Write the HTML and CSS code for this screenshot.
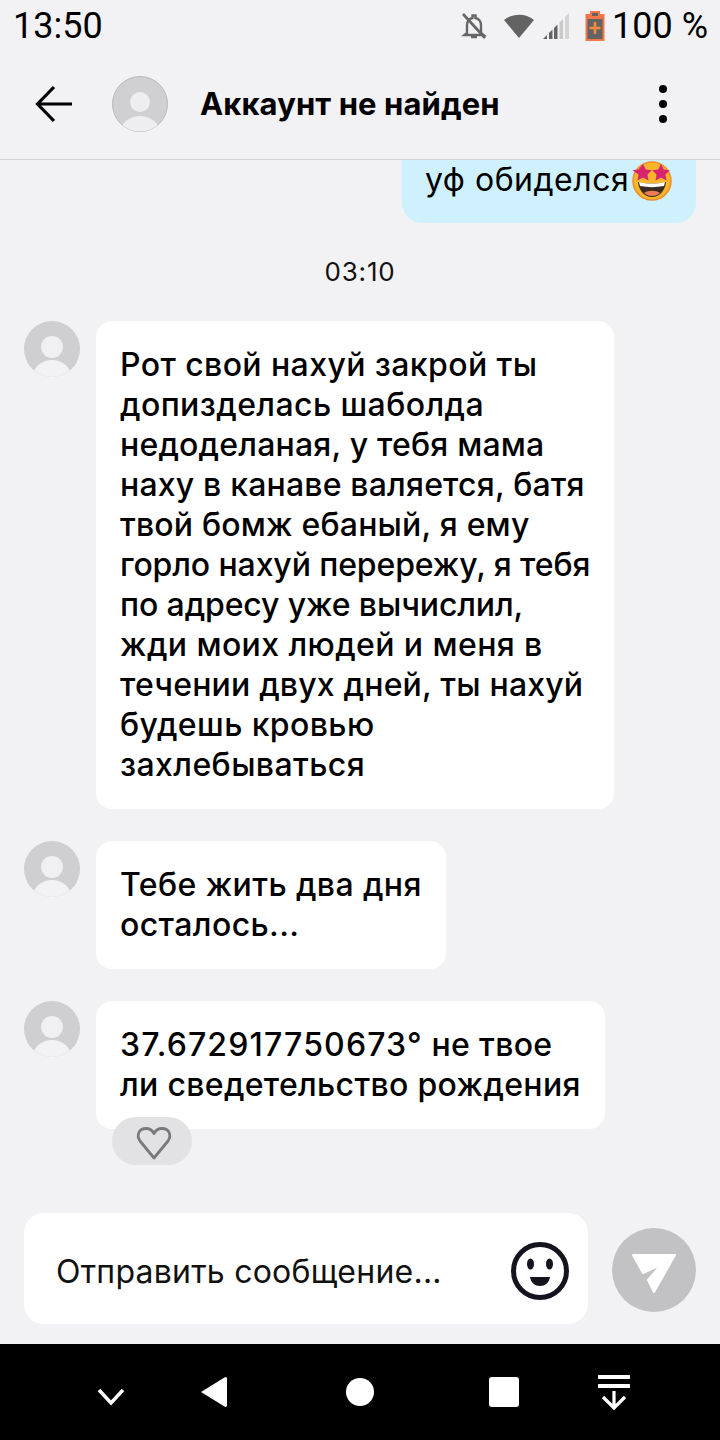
FILE: index.html
```html
<!DOCTYPE html>
<html lang="ru">
<head>
<meta charset="utf-8">
<title>Аккаунт не найден</title>
<link rel="stylesheet" href="styles.css">
</head>
<body>
<div class="phone">
  <div class="status">
    <span class="clock">13:50</span>
    <div class="status-right">
      <svg class="ic-bell" width="28" height="28" viewBox="0 0 28 28"><path d="M7 21V13a7 7 0 0 1 5.500-7V3.500h3V6a7 7 0 0 1 5.500 7v8l2.500 2H4.500z" fill="none" stroke="#666" stroke-width="2.400"/><path d="M11 25h6" stroke="#666" stroke-width="2.500"/><path d="M3 2l22 24" stroke="#666" stroke-width="2.600"/></svg>
      <svg class="ic-wifi" width="32" height="26" viewBox="0 0 32 26"><path d="M1 7C9 0 23 0 31 7L16 25z" fill="#636363"/></svg>
      <svg class="ic-signal" width="28" height="28" viewBox="0 0 28 28"><path d="M0 27l4-4v4z" fill="#636363"/><path d="M6 27v-6l3.500-3.500V27z" fill="#636363"/><path d="M11 27V16l3.500-3.500V27z" fill="#636363"/><path d="M16.500 27V10.500L20 7v20z" fill="#c9c9c9"/><path d="M22 27V5l4-4v26z" fill="#d4d4d4"/></svg>
      <svg class="ic-batt" width="20" height="30" viewBox="0 0 20 30"><path d="M6 1h8v3h4.500v25H1.500V4H6z" fill="#636363" stroke="#f2764a" stroke-width="2"/><path d="M2.500 5h15v3h-15z" fill="#f2764a"/><path d="M10 11v12M4.500 17h11" stroke="#f58a3c" stroke-width="2.600"/></svg>
      <span class="percent">100 %</span>
    </div>
  </div>

  <header class="topbar">
    <svg class="back" width="40" height="38" viewBox="0 0 40 38"><path d="M38 19H4M20 2L3.500 19 20 36" fill="none" stroke="#000" stroke-width="3.200"/></svg>
    <svg class="top-avatar" width="56" height="56" viewBox="0 0 56 56"><defs><clipPath id="ca"><circle cx="28" cy="28" r="27.500"/></clipPath></defs><circle cx="28" cy="28" r="27.500" fill="#d0d0d3" stroke="#b9b9bc" stroke-width="1"/><g clip-path="url(#ca)"><circle cx="28" cy="26" r="10" fill="#eeeef0"/><ellipse cx="28" cy="55" rx="19" ry="15" fill="#eeeef0"/></g></svg>
    <h1 class="title">Аккаунт не найден</h1>
    <div class="kebab"><i></i><i></i><i></i></div>
  </header>

  <main class="chat">
    <div class="own-row">
      <div class="own">уф обиделся<svg class="emoji" width="40" height="40" viewBox="0 0 40 40"><circle cx="20" cy="20" r="19" fill="#f8b52c"/><circle cx="20" cy="20" r="19" fill="none" stroke="#f18b26" stroke-width="1.500"/><path d="M11 3l2.800 5.500 6 .7-4.300 4.200 1 6-5.500-2.900-5.500 2.900 1-6L.500 9.200l6-.7z" fill="#d8246e"/><path d="M29 3l2.800 5.500 6 .7-4.300 4.200 1 6-5.500-2.900-5.500 2.900 1-6-4.300-4.200 6-.7z" fill="#d8246e"/><path d="M6 21c8 2 20 2 28 0-1 9-7 15-14 15S7 30 6 21z" fill="#3a2a22"/><path d="M7 21c8 2 18 2 26 0l-1 4c-8 1.500-16 1.500-24 0z" fill="#fff"/><path d="M12 32c4-3 12-3 16 0-4 4-12 4-16 0z" fill="#ee7b54"/></svg></div>
    </div>

    <div class="time">03:10</div>

    <div class="msg">
      <svg class="avatar" width="56" height="56" viewBox="0 0 56 56"><defs><clipPath id="c1"><circle cx="28" cy="28" r="28"/></clipPath></defs><circle cx="28" cy="28" r="28" fill="#cfcfd2"/><g clip-path="url(#c1)"><circle cx="28" cy="26" r="11" fill="#f0eff2"/><ellipse cx="28" cy="58" rx="20" ry="19" fill="#f2f1f4"/></g></svg>
      <div class="bubble">Рот свой нахуй закрой ты<br>допизделась шаболда<br><span class="t1">недоделаная, у тебя мама</span><br><span class="t1">наху в канаве валяется, батя</span><br><span class="t1">твой бомж ебаный, я ему</span><br><span class="t2">горло нахуй перережу, я тебя</span><br><span class="t2">по адресу уже вычислил,</span><br>жди моих людей и меня в<br><span class="t1">течении двух дней, ты нахуй</span><br>будешь кровью<br>захлебываться</div>
    </div>

    <div class="msg">
      <svg class="avatar" width="56" height="56" viewBox="0 0 56 56"><circle cx="28" cy="28" r="28" fill="#cfcfd2"/><g clip-path="url(#c1)"><circle cx="28" cy="26" r="11" fill="#f0eff2"/><ellipse cx="28" cy="58" rx="20" ry="19" fill="#f2f1f4"/></g></svg>
      <div class="bubble">Тебе жить два дня<br>осталось...</div>
    </div>

    <div class="msg">
      <svg class="avatar" width="56" height="56" viewBox="0 0 56 56"><circle cx="28" cy="28" r="28" fill="#cfcfd2"/><g clip-path="url(#c1)"><circle cx="28" cy="26" r="11" fill="#f0eff2"/><ellipse cx="28" cy="58" rx="20" ry="19" fill="#f2f1f4"/></g></svg>
      <div class="bubble lean"><span class="num">37.672917750673°</span> не твое<br>ли сведетельство рождения
        <div class="like"><svg width="38" height="34" viewBox="0 0 38 34"><path d="M19 32L5 15C1 9 4 2.500 11 2.500c3.500 0 6.500 2 8 5 1.500-3 4.500-5 8-5 7 0 10 6.500 6 12.500z" fill="none" stroke="#7a7a7c" stroke-width="2.800" stroke-linejoin="round"/></svg></div>
      </div>
    </div>
  </main>

  <div class="composer">
    <div class="field">
      <span class="placeholder">Отправить сообщение...</span>
      <svg class="smile" width="60" height="60" viewBox="0 0 60 60"><circle cx="30" cy="30" r="26.500" fill="none" stroke="#14141e" stroke-width="5"/><ellipse cx="20.500" cy="23" rx="3.500" ry="5.500" fill="#14141e"/><ellipse cx="39.500" cy="23" rx="3.500" ry="5.500" fill="#14141e"/><path d="M20 36h20c-1 6-5 9-10 9s-9-3-10-9z" fill="#14141e"/></svg>
    </div>
    <div class="send"><svg width="46" height="42" viewBox="0 0 46 42"><path d="M2 2h42L23 39l-6-12 13-15-18 8z" fill="#fff" stroke="#fff" stroke-width="2" stroke-linejoin="round"/></svg></div>
  </div>

  <nav class="navbar">
    <svg class="nav-chevron" width="30" height="20" viewBox="0 0 30 20"><path d="M3 3l12 13L27 3" fill="none" stroke="#fff" stroke-width="3.500"/></svg>
    <svg class="nav-back" width="28" height="32" viewBox="0 0 28 32"><path d="M25.500 1a1.500 1.500 0 0 1 1.500 1.500v27a1.500 1.500 0 0 1-2.500 1L1 16 24.500 1.500z" fill="#fff"/></svg>
    <div class="nav-dot"></div>
    <div class="nav-square"></div>
    <svg class="nav-down" width="32" height="36" viewBox="0 0 32 36"><path d="M1 3h30M1 12h30" stroke="#fff" stroke-width="4" stroke-linecap="round" fill="none"/><path d="M16 17v17M5 23l11 11 11-11" stroke="#fff" stroke-width="3.200" fill="none"/></svg>
  </nav>
</div>
</body>
</html>
```

FILE: styles.css
```css
* { box-sizing: border-box; }
html, body { margin: 0; padding: 0; }
body { background: #f2f1f4; font-family: Inter, "Noto Sans", sans-serif; color: #000; }
.phone { width: 720px; height: 1440px; display: flex; flex-direction: column; overflow: hidden; background: #f2f1f4; }

.status { height: 52px; flex: none; display: flex; align-items: center; justify-content: space-between; padding: 0 12px 0 13px; font-family: Roboto, sans-serif; font-size: 36px; color: #000; }
.status-right { display: flex; align-items: center; }
.clock { line-height: 52px; }
.percent { line-height: 52px; margin-left: 7px; }
.ic-bell { margin-right: 15px; }
.ic-wifi { margin-right: 8px; }
.ic-signal { margin-right: 14px; }

.topbar { height: 108px; flex: none; display: flex; align-items: center; padding: 0 0 0 34px; border-bottom: 1px solid #d6d5d8; }
.back { flex: none; margin-bottom: 4px; }
.top-avatar { flex: none; margin-left: 38px; margin-bottom: 4px; }
.title { margin: 0 0 4px 32px; font-size: 31px; font-weight: 700; letter-spacing: 0.1px; flex: 1; }
.kebab { width: 8px; margin: 0 53px 4px 0; display: flex; flex-direction: column; gap: 7px; }
.kebab i { display: block; width: 8px; height: 8px; border-radius: 50%; background: #000; }

.chat { flex: 1; min-height: 0; display: flex; flex-direction: column; padding: 0 24px; overflow: hidden; }
.own-row { display: flex; justify-content: flex-end; }
.own { width: 294px; height: 63px; background: #cff1fd; border-radius: 0 0 20px 20px; padding-left: 23px; font-size: 32px; line-height: 40px; letter-spacing: 0.5px; display: flex; align-items: flex-start; white-space: nowrap; }
.emoji { flex: none; margin: 1px 0 0 3px; }
.time { text-align: center; font-size: 26px; line-height: 30px; letter-spacing: 0.8px; margin-top: 34px; color: #111; }
.msg { display: flex; gap: 16px; align-items: flex-start; margin-bottom: 32px; }
.time + .msg { margin-top: 34px; }
.avatar { flex: none; }
.bubble { position: relative; background: #fff; border-radius: 16px; padding: 24px; font-size: 32px; line-height: 40px; font-weight: 500; letter-spacing: 0.4px; white-space: nowrap; }
.lean { letter-spacing: 0.32px; }
.t1 { letter-spacing: 0.18px; }
.t2 { letter-spacing: -0.12px; }
.num { letter-spacing: 1.15px; }
.like { position: absolute; left: 16px; top: 116px; width: 80px; height: 48px; padding: 4px 0 0 4px; border-radius: 24px; background: #e2e1e4; display: flex; align-items: center; justify-content: center; }

.composer { flex: none; height: 131px; display: flex; align-items: flex-start; padding: 0 24px; gap: 24px; }
.field { width: 564px; height: 111px; padding: 5px 18px 0 32px; background: #fff; border-radius: 20px; display: flex; align-items: center; justify-content: space-between; }
.placeholder { font-size: 32px; color: #111; font-weight: 400; letter-spacing: 0.23px; }
.send { width: 84px; height: 84px; padding-top: 7px; border-radius: 50%; background: #c2c2c4; display: flex; align-items: center; justify-content: center; margin-top: 15px; }

.navbar { flex: none; height: 96px; background: #000; display: flex; align-items: center; padding-left: 96px; }
.nav-chevron { margin-top: 10px; }
.nav-back { margin-left: 74px; }
.nav-dot { width: 28px; height: 28px; margin-left: 118px; border-radius: 50%; background: #fff; }
.nav-square { width: 30px; height: 30px; margin-left: 115px; border-radius: 3px; background: #fff; }
.nav-down { margin-left: 79px; }
```
